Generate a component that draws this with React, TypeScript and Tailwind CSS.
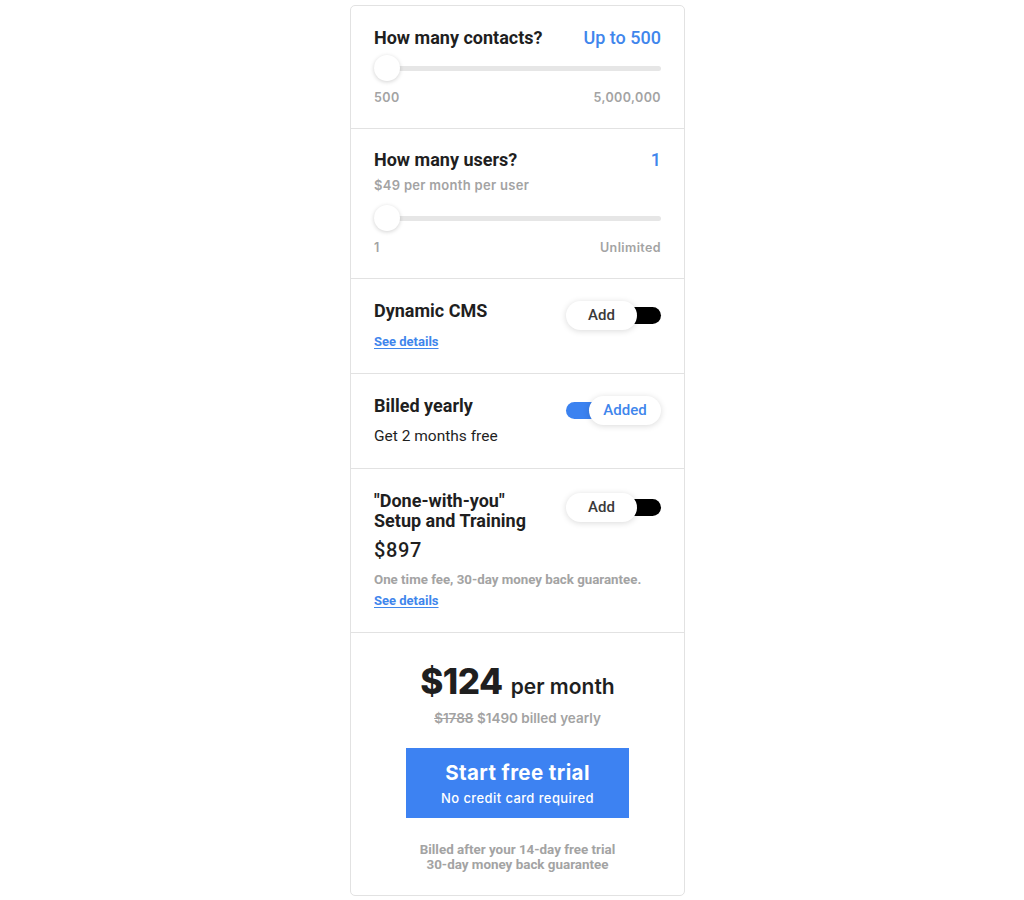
import React from 'react'

const roboto = { fontFamily: 'Roboto, "Liberation Sans", sans-serif' }

function Slider({ label, value, min, max, sub }: { label: string; value: string; min: string; max: string; sub?: string }) {
  return (
    <div>
      <div className="flex items-center justify-between">
        <h3 className="text-[18px] leading-6 font-bold text-[#1f1f1f]">{label}</h3>
        <span className="text-[18px] leading-6 font-medium text-[#3f86ec]">{value}</span>
      </div>
      {sub && (
        <p className="mt-1 text-[13px] leading-[18px] font-semibold text-[#a3a3a3] font-['Inter',sans-serif] tracking-[0.3px]">{sub}</p>
      )}
      <div className={`relative h-[26px] ${sub ? 'mt-[11px]' : 'mt-[5px]'}`}>
        <div className="absolute left-0 right-0 top-[11px] h-[5px] rounded-full bg-[#e6e6e6]" />
        <div className="absolute left-0 top-0 w-[26px] h-[26px] rounded-full bg-white shadow-[0_1px_4px_rgba(0,0,0,0.18)]" />
      </div>
      <div className="mt-[9px] flex justify-between text-[12.5px] leading-4 font-semibold text-[#a3a3a3] font-['Inter',sans-serif] tracking-[0.4px]">
        <span>{min}</span>
        <span>{max}</span>
      </div>
    </div>
  )
}

function Toggle({ on }: { on?: boolean }) {
  if (on) {
    return (
      <div className="relative w-[95px] h-[29px] shrink-0">
        <div className="absolute left-0 top-[6px] w-[60px] h-[17px] rounded-full bg-[#3b82f0]" />
        <div className="absolute right-0 top-0 w-[72px] h-[29px] rounded-full bg-white shadow-[0_1px_6px_rgba(0,0,0,0.15)] flex items-center justify-center text-[15px] font-medium text-[#3f86ec]">
          Added
        </div>
      </div>
    )
  }
  return (
    <div className="relative w-[95px] h-[29px] shrink-0 mt-[2px]">
      <div className="absolute right-0 top-[6px] w-[60px] h-[17px] rounded-full bg-black" />
      <div className="absolute left-0 top-0 w-[71px] h-[29px] rounded-full bg-white shadow-[0_1px_6px_rgba(0,0,0,0.15)] flex items-center justify-center text-[15px] font-medium text-[#3a3a3a]">
        Add
      </div>
    </div>
  )
}

function Link({ className = '' }: { className?: string }) {
  return (
    <a className={`block w-fit text-[13px] leading-[18px] font-bold text-[#3f86ec] underline underline-offset-2 cursor-pointer ${className}`}>
      See details
    </a>
  )
}

export default function App() {
  return (
    <div className="min-h-[900px] bg-white" style={roboto}>
      <div className="ml-[350px] mt-[5px] w-[335px] border border-[#e2e2e2] rounded-[5px] bg-white">
        <div className="px-[23px] pt-5 pb-[22px] border-b border-[#e2e2e2]">
          <Slider label="How many contacts?" value="Up to 500" min="500" max="5,000,000" />
        </div>

        <div className="px-[23px] pt-[19px] pb-[22px] border-b border-[#e2e2e2]">
          <Slider label="How many users?" value="1" min="1" max="Unlimited" sub="$49 per month per user" />
        </div>

        <div className="px-[23px] pt-5 pb-[22px] border-b border-[#e2e2e2] flex justify-between">
          <div>
            <h3 className="text-[18px] leading-6 font-bold text-[#1f1f1f]">Dynamic CMS</h3>
            <Link className="mt-[10px]" />
          </div>
          <Toggle />
        </div>

        <div className="px-[23px] pt-5 pb-[22px] border-b border-[#e2e2e2] flex justify-between">
          <div>
            <h3 className="text-[18px] leading-6 font-bold text-[#1f1f1f]">Billed yearly</h3>
            <p className="mt-2 text-[15.5px] leading-5 text-[#1f1f1f]">Get 2 months free</p>
          </div>
          <div className="pt-[2px]"><Toggle on /></div>
        </div>

        <div className="px-[23px] pt-[22px] pb-[22px] border-b border-[#e2e2e2]">
          <div className="flex justify-between">
            <h3 className="text-[18px] leading-5 font-bold text-[#1f1f1f]">
              "Done-with-you"
              <br />
              Setup and Training
            </h3>
            <Toggle />
          </div>
          <p className="mt-[6px] text-[20px] leading-[26px] font-medium text-[#1f1f1f] tracking-[0.6px]">$897</p>
          <p className="mt-2 text-[13.3px] leading-[18px] font-bold text-[#a3a3a3]">One time fee, 30-day money back guarantee.</p>
          <Link className="mt-[3px]" />
        </div>

        <div className="px-[23px] pt-[31px] pb-[23px] flex flex-col items-center">
          <p className="flex items-baseline text-[#1f1f1f] font-['Inter',sans-serif]">
            <span className="text-[35px] leading-none font-extrabold tracking-[-0.5px]">$124</span>
            <span className="ml-2 text-[21px] leading-none font-semibold">per month</span>
          </p>
          <p className="mt-[10px] text-[13.5px] leading-[18px] font-semibold text-[#a3a3a3] font-['Inter',sans-serif]">
            <span className="line-through">$1788</span> $1490 billed yearly
          </p>
          <button className="mt-[21px] w-[223px] h-[70px] bg-[#3d82f2] text-white flex flex-col items-center justify-center font-['Inter',sans-serif]">
            <span className="text-[20.5px] leading-6 font-bold tracking-[0.4px]">Start free trial</span>
            <span className="mt-[5px] text-[13px] leading-4 font-medium tracking-[0.4px]">No credit card required</span>
          </button>
          <div className="mt-[24px] text-center text-[13.4px] leading-[15px] font-bold text-[#a3a3a3]">
            <p>Billed after your 14-day free trial</p>
            <p>30-day money back guarantee</p>
          </div>
        </div>
      </div>
    </div>
  )
}
